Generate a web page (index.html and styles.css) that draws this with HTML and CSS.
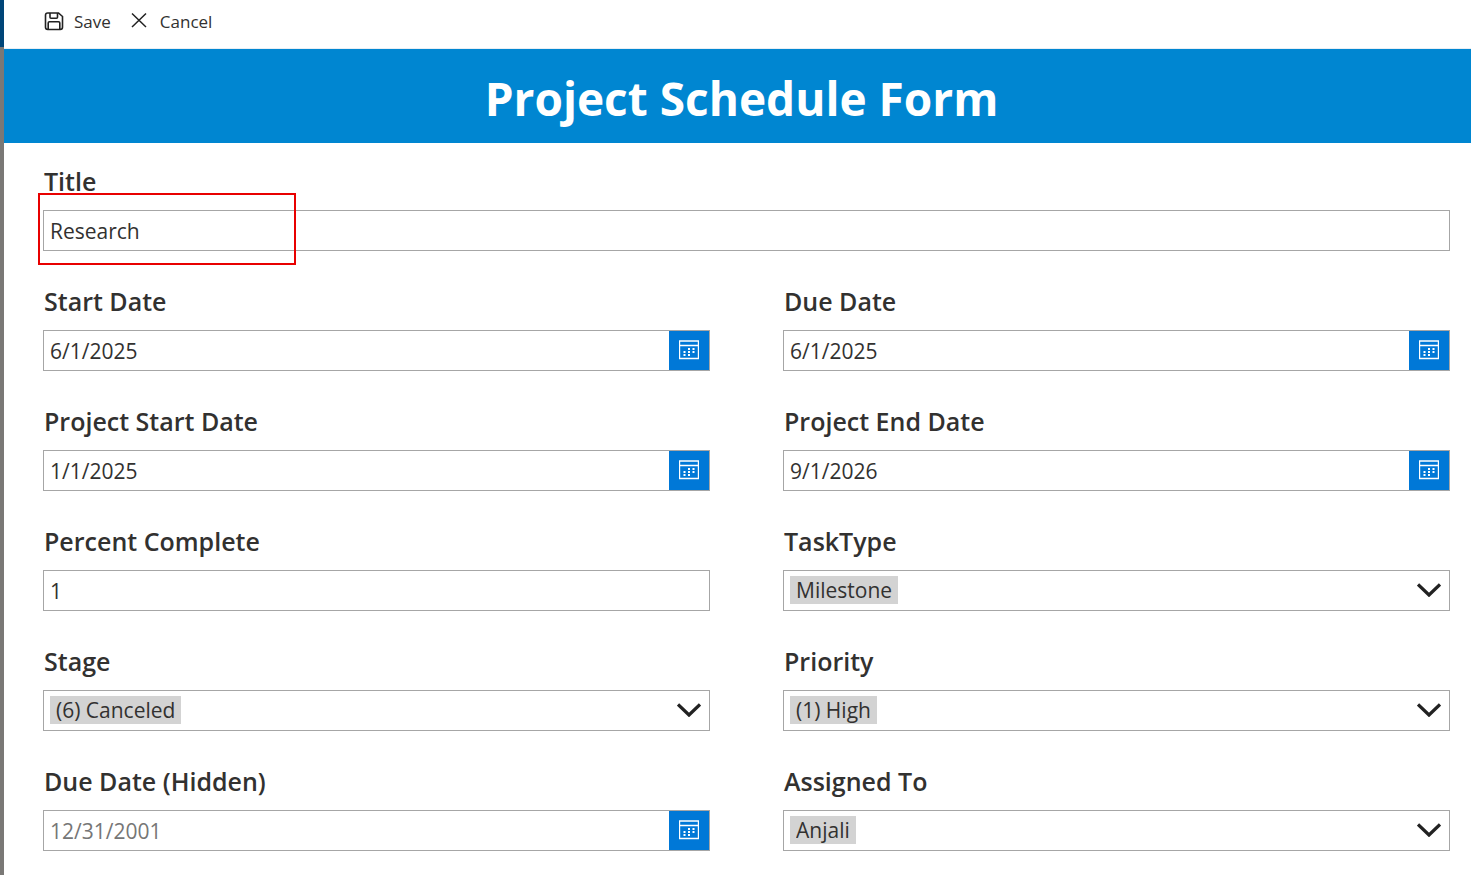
FILE: index.html
```html
<!DOCTYPE html>
<html lang="en">
<head>
<meta charset="utf-8">
<meta name="viewport" content="width=device-width, initial-scale=1">
<title>Project Schedule Form</title>
<link rel="stylesheet" href="styles.css">
</head>
<body>
<svg width="0" height="0" class="sprite" aria-hidden="true">
  <symbol id="calendar" viewBox="0 0 20 20">
    <path d="M.5 1h19v17.500H.5zM.5 5.500h19" fill="none" stroke="#fff" stroke-width="1.400"/>
    <path d="M9 8h2v2H9zM13.500 8h2v2h-2zM4.500 11h2v2h-2zM9 11h2v2H9zM13.500 11h2v2h-2zM4.500 14h2v2h-2zM9 14h2v2H9z" fill="#fff"/>
  </symbol>
  <symbol id="chevron" viewBox="0 0 24 14">
    <path d="M1 1.500l11 10.500L23 1.500" fill="none" stroke="#222" stroke-width="3.300"/>
  </symbol>
</svg>
<div class="shell">
  <div class="rail"></div>
  <main class="panel">
    <div class="toolbar">
      <button class="command" type="submit" form="schedule">
        <svg class="command-icon" viewBox="0 0 20 20" aria-hidden="true"><path d="M3.700 2h10.800l4 3.500v10.800c0 1.200-.8 2.200-2.200 2.200H3.700c-1.200 0-2.200-.9-2.200-2.200V4.200c0-1.300 1-2.200 2.200-2.200zM4.200 18.500V12c0-.8.4-1.200 1.200-1.200h9.200c.8 0 1.200.4 1.200 1.200v6.500M6 2v4.300c0 .6.400 1 1 1h5.500c.6 0 1-.4 1-1V2" fill="none" stroke="#222" stroke-width="1.600"/></svg>
        <span>Save</span>
      </button>
      <button class="command" type="button">
        <svg class="command-icon" viewBox="0 0 20 20" aria-hidden="true"><path d="M2 2.500l14 13.500M16 2.500L2 16" fill="none" stroke="#222" stroke-width="1.500"/></svg>
        <span>Cancel</span>
      </button>
    </div>
    <h1 class="banner">Project Schedule Form</h1>
    <form class="form" id="schedule">
      <div class="field field-wide">
        <label for="title">Title</label>
        <div class="box"><input id="title" type="text" value="Research"></div>
        <div class="marker"></div>
      </div>
      <div class="field">
        <label for="start">Start Date</label>
        <div class="box"><input id="start" type="text" value="6/1/2025"><button class="pick" type="button" aria-label="Choose start date"><svg><use href="#calendar"/></svg></button></div>
      </div>
      <div class="field">
        <label for="due">Due Date</label>
        <div class="box"><input id="due" type="text" value="6/1/2025"><button class="pick" type="button" aria-label="Choose due date"><svg><use href="#calendar"/></svg></button></div>
      </div>
      <div class="field">
        <label for="pstart">Project Start Date</label>
        <div class="box"><input id="pstart" type="text" value="1/1/2025"><button class="pick" type="button" aria-label="Choose project start date"><svg><use href="#calendar"/></svg></button></div>
      </div>
      <div class="field">
        <label for="pend">Project End Date</label>
        <div class="box"><input id="pend" type="text" value="9/1/2026"><button class="pick" type="button" aria-label="Choose project end date"><svg><use href="#calendar"/></svg></button></div>
      </div>
      <div class="field">
        <label for="percent">Percent Complete</label>
        <div class="box"><input id="percent" type="text" value="1"></div>
      </div>
      <div class="field">
        <label for="type">TaskType</label>
        <div class="box box-select"><select id="type"><option>Milestone</option></select><svg class="chevron" aria-hidden="true"><use href="#chevron"/></svg></div>
      </div>
      <div class="field">
        <label for="stage">Stage</label>
        <div class="box box-select"><select id="stage"><option>(6) Canceled</option></select><svg class="chevron" aria-hidden="true"><use href="#chevron"/></svg></div>
      </div>
      <div class="field">
        <label for="priority">Priority</label>
        <div class="box box-select"><select id="priority"><option>(1) High</option></select><svg class="chevron" aria-hidden="true"><use href="#chevron"/></svg></div>
      </div>
      <div class="field">
        <label for="hidden-due">Due Date (Hidden)</label>
        <div class="box"><input id="hidden-due" type="text" placeholder="12/31/2001"><button class="pick" type="button" aria-label="Choose hidden due date"><svg><use href="#calendar"/></svg></button></div>
      </div>
      <div class="field">
        <label for="assigned">Assigned To</label>
        <div class="box box-select"><select id="assigned"><option>Anjali</option></select><svg class="chevron" aria-hidden="true"><use href="#chevron"/></svg></div>
      </div>
    </form>
  </main>
</div>
</body>
</html>
```
FILE: styles.css
```css
* {
  box-sizing: border-box;
}

body {
  margin: 0;
  background: #fff;
  color: #323130;
  font-family: "Open Sans", "Noto Sans", sans-serif;
}

button,
input,
select {
  font: inherit;
  color: inherit;
}

.sprite {
  position: absolute;
}

.shell {
  display: flex;
  min-height: 100vh;
}

.rail {
  width: 4px;
  flex: none;
  background: linear-gradient(#004578 47px, #7a7876 47px);
}

.panel {
  flex: 1;
  min-width: 0;
}

.toolbar {
  display: flex;
  gap: 19px;
  height: 49px;
  padding: 0 40px 6px;
  border-bottom: 1px solid #e8eef4;
}

.command {
  display: flex;
  align-items: center;
  gap: 10px;
  padding: 0;
  border: 0;
  background: none;
  font-size: 17px;
}

.command-icon {
  width: 20px;
  height: 20px;
}

.banner {
  margin: 0;
  padding: 17px 0 13px 8px;
  background: #0086d1;
  color: #fff;
  font-size: 46px;
  font-weight: 700;
  line-height: 64px;
  text-align: center;
}

.form {
  display: grid;
  grid-template-columns: 1fr 1fr;
  gap: 36px 73px;
  padding: 24px 21px 24px 39px;
}

.field {
  position: relative;
  display: flex;
  flex-direction: column;
  gap: 14px;
  min-width: 0;
}

.field-wide {
  grid-column: 1 / -1;
}

.field label {
  padding-left: 1px;
  font-size: 25px;
  font-weight: 600;
  line-height: 29px;
}

.box {
  display: flex;
  align-items: center;
  height: 41px;
  border: 1px solid #a6a6a6;
}

.box input {
  flex: 1;
  min-width: 0;
  height: 100%;
  padding: 0 6px;
  border: 0;
  background: none;
  font-size: 21px;
}

.box input::placeholder {
  color: #767676;
  opacity: 1;
}

.pick {
  display: flex;
  align-items: center;
  justify-content: center;
  width: 40px;
  height: 100%;
  padding: 0 0 2px;
  border: 0;
  background: #0078d7;
}

.pick svg {
  width: 20px;
  height: 20px;
}

.box-select {
  justify-content: space-between;
  padding: 0 8px 2px 6px;
}

.box-select select {
  appearance: none;
  field-sizing: content;
  height: 28px;
  padding: 0 6px;
  border: 0;
  border-radius: 0;
  background: #d3d3d3;
  font-size: 21px;
  line-height: 28px;
}

.chevron {
  width: 24px;
  height: 14px;
}

.marker {
  position: absolute;
  top: 26px;
  left: -5px;
  width: 258px;
  height: 72px;
  border: 2px solid #e80000;
  pointer-events: none;
}
```
